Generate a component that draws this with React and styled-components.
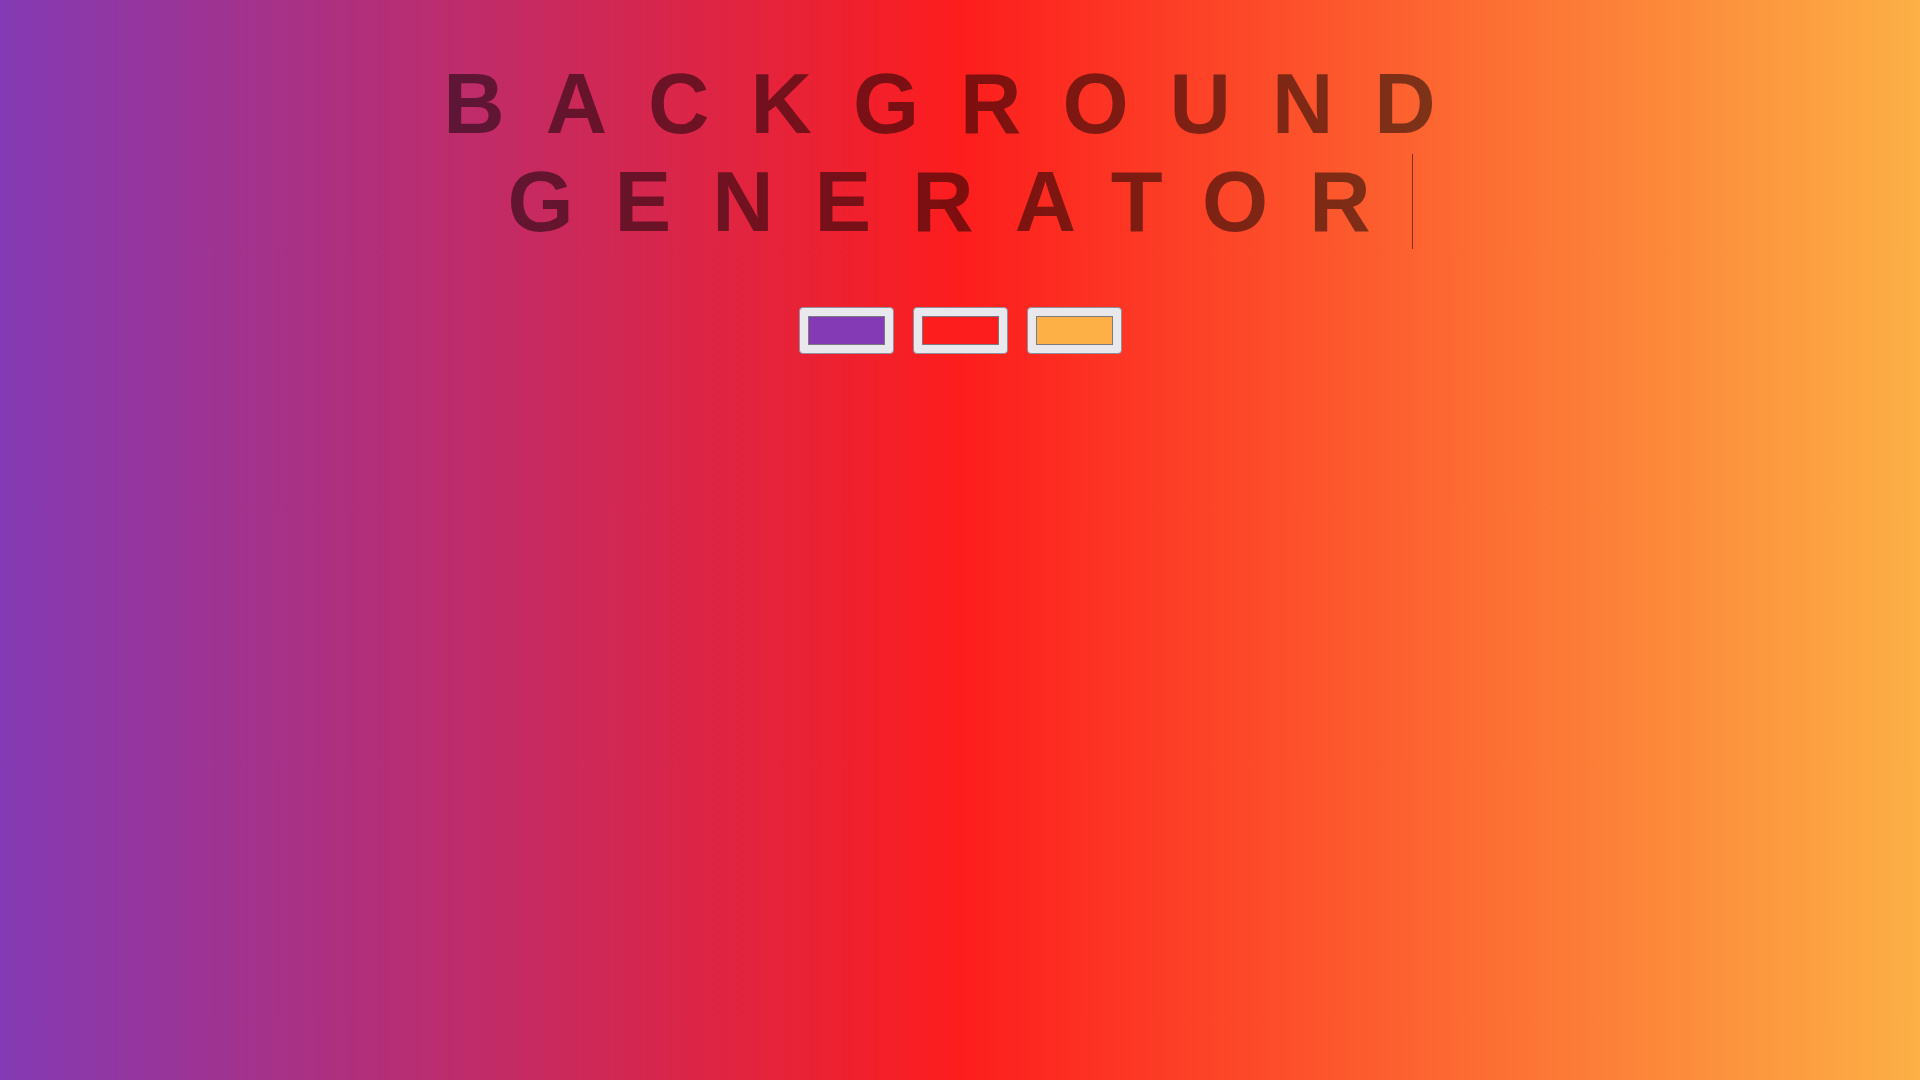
import React, { useState } from "react";
import styled, { createGlobalStyle } from "styled-components";

const GlobalStyle = createGlobalStyle`
  html, body {
    margin: 0;
    padding: 0;
  }
  body {
    font-family: "Liberation Sans", Arial, sans-serif;
  }
`;

const Page = styled.div`
  display: flow-root;
  min-height: 100vh;
  background: linear-gradient(
    to right,
    ${props => props.colors[0]},
    ${props => props.colors[1]},
    ${props => props.colors[2]}
  );
`;

const Title = styled.h1`
  margin: 55px 0 56px;
  font-size: 85px;
  font-weight: bold;
  letter-spacing: 41px;
  text-align: center;
  color: rgba(0, 0, 0, 0.5);
`;

const Typed = styled.span`
  border-right: 1px solid currentColor;
`;

const Pickers = styled.div`
  display: flex;
  justify-content: center;
  gap: 19px;
`;

const ColorInput = styled.input`
  box-sizing: border-box;
  width: 95px;
  height: 47px;
  margin: 0;
  padding: 8px;
  border: 1px solid #8f8f9d;
  border-radius: 4px;
  background: #e9e9ed;
  cursor: pointer;

  &::-webkit-color-swatch-wrapper {
    padding: 0;
  }
  &::-webkit-color-swatch {
    border: 1px solid #7a7a80;
    border-radius: 0;
  }
`;

const App = () => {
  const [colors, setColors] = useState(["#833ab4", "#fd1d1d", "#fcb045"]);

  const setColor = (index, value) =>
    setColors(prev => prev.map((c, i) => (i === index ? value : c)));

  return (
    <>
      <GlobalStyle />
      <Page colors={colors}>
        <Title>
          <Typed>BACKGROUND GENERATOR</Typed>
        </Title>
        <Pickers>
          {colors.map((color, index) => (
            <ColorInput
              key={index}
              type="color"
              value={color}
              onChange={e => setColor(index, e.target.value)}
            />
          ))}
        </Pickers>
      </Page>
    </>
  );
};

export default App;
